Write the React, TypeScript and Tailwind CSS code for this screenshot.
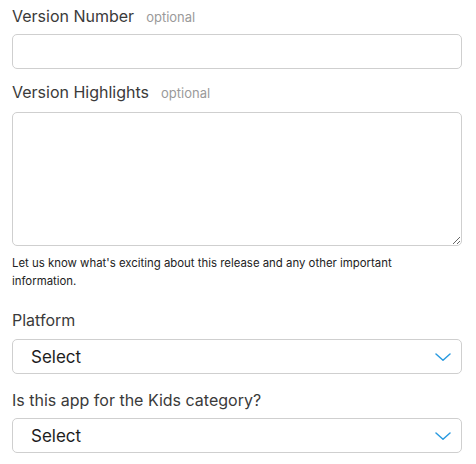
import React from "react";

function Chevron() {
  return (
    <svg width="16" height="8" viewBox="0 0 16 8" fill="none" className="shrink-0">
      <path d="M1 1l7 6.2L15 1" stroke="#2a9be0" strokeWidth="1.5" strokeLinecap="round" strokeLinejoin="round" />
    </svg>
  );
}

function SelectBox() {
  return (
    <div className="flex h-[35px] w-[450px] items-center justify-between rounded-[5px] border border-[#cfcfcf] bg-white pl-[18px] pr-[10px]">
      <span className="text-[17px] leading-[24px] text-[#1d1d1d]">Select</span>
      <Chevron />
    </div>
  );
}

export default function App() {
  return (
    <div
      className="flex w-[476px] h-[464px] flex-col bg-white pl-[12px] text-[#333]"
      style={{ fontFamily: "Inter, 'Noto Sans', sans-serif" }}
    >
      <div className="mt-[4px] flex items-baseline gap-[12px]">
        <span className="text-[16px] leading-[24px] text-[#3a3a3a]">Version Number</span>
        <span className="text-[13px] text-[#9a9a9a]">optional</span>
      </div>
      <input className="mt-[6px] h-[35px] w-[450px] rounded-[5px] border border-[#cfcfcf] bg-white outline-none" />
      <div className="mt-[11px] flex items-baseline gap-[12px]">
        <span className="text-[16px] leading-[24px] text-[#3a3a3a]">Version Highlights</span>
        <span className="text-[13px] text-[#9a9a9a]">optional</span>
      </div>
      <textarea className="mt-[8px] h-[134px] w-[450px] rounded-[5px] border border-[#cfcfcf] bg-white outline-none" />
      <p className="mt-[8px] w-[440px] text-[11.4px] leading-[18px] text-[#222]">
        Let us know what's exciting about this release and any other important information.
      </p>
      <div className="mt-[18px] text-[16px] leading-[24px] text-[#3a3a3a]">Platform</div>
      <div className="mt-[7px]">
        <SelectBox />
      </div>
      <div className="mt-[14px] text-[16px] leading-[24px] text-[#3a3a3a]">Is this app for the Kids category?</div>
      <div className="mt-[6px]">
        <SelectBox />
      </div>
    </div>
  );
}
